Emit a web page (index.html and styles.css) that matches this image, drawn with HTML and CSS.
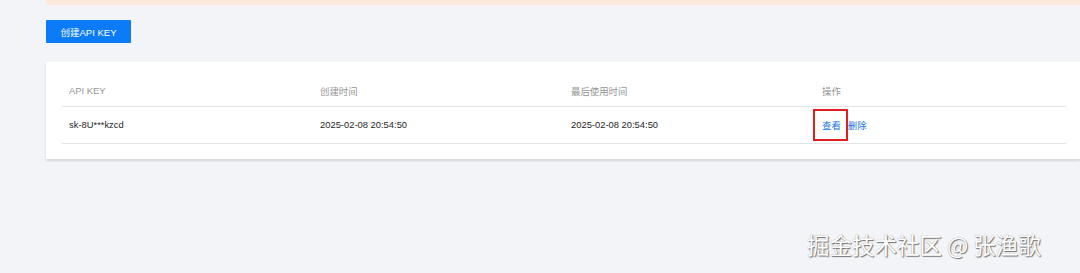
FILE: index.html
```html
<!DOCTYPE html>
<html lang="zh">
<head>
<meta charset="utf-8">
<link rel="stylesheet" href="styles.css">
</head>
<body>
<div class="page">
  <div class="notice"></div>
  <div class="toolbar"><button class="btn-primary">创建API KEY</button></div>
  <div class="card">
    <table class="keys">
      <thead>
        <tr><th>API KEY</th><th>创建时间</th><th>最后使用时间</th><th>操作</th></tr>
      </thead>
      <tbody>
        <tr>
          <td>sk-8U***kzcd</td>
          <td>2025-02-08 20:54:50</td>
          <td>2025-02-08 20:54:50</td>
          <td><span class="link marked">查看</span><span class="link del">删除</span></td>
        </tr>
      </tbody>
    </table>
  </div>
</div>
<div class="watermark">掘金技术社区 @ 张渔歌</div>
</body>
</html>
```
FILE: styles.css
```css
html, body { margin: 0; padding: 0; }
body {
  width: 1080px; height: 273px; overflow: hidden;
  background: #f3f4f8;
  font-family: "Liberation Sans", Arial, "Noto Sans CJK SC", sans-serif;
  position: relative;
}
.page { padding-left: 46px; }
.notice { height: 5px; background: #fde9dc; }
.toolbar { padding-top: 15px; height: 42px; box-sizing: border-box; }
.btn-primary {
  display: block; width: 85px; height: 23px; margin: 0; padding: 0;
  border: 0; border-radius: 1px;
  background: #0b7bf8; color: #fff;
  font-family: "Liberation Sans", Arial, "Noto Sans CJK SC", sans-serif;
  font-size: 9.5px;
}
.card {
  margin-top: 15px;
  background: #fff;
  padding: 14px 14px 15px 16px;
  box-shadow: 0 2px 2px rgba(0,0,0,0.12);
}
.keys { width: 1004px; border-collapse: collapse; table-layout: fixed; }
.keys th, .keys td {
  text-align: left; padding: 0 7px; width: 251px; box-sizing: border-box;
}
.keys th {
  height: 30px; color: #959595; font-weight: normal; font-size: 9.4px;
  border-bottom: 1px solid #e3e3e3;
}
.keys td {
  height: 37px; color: #262626; font-size: 9.4px;
  border-bottom: 1px solid #e3e3e3;
}
.link { color: #1a73e8; }
.del { margin-left: 7px; }
.marked { position: relative; }
.marked::after {
  content: ""; position: absolute;
  left: -9px; right: -7px; top: -11px; bottom: -10px;
  border: 2px solid #e0201d;
}
.watermark {
  position: absolute; left: 807px; top: 229px;
  font-family: "Noto Sans CJK SC", sans-serif;
  font-size: 22.5px; line-height: 30px;
  color: #fff;
  text-shadow: 1px 1px 1px #707070, 0 0 1px #999;
}
```
